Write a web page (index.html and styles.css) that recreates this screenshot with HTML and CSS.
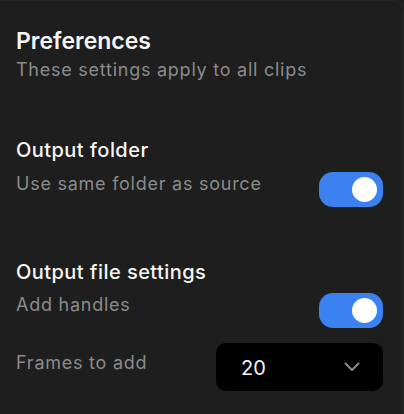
FILE: index.html
```html
<!DOCTYPE html>
<html>
<head>
<meta charset="utf-8">
<link rel="stylesheet" href="styles.css">
</head>
<body>
<div class="panel">
  <header class="head">
    <h1 class="title">Preferences</h1>
    <p class="sub">These settings apply to all clips</p>
  </header>

  <section class="section first">
    <h2 class="sec-title">Output folder</h2>
    <div class="row row-toggle-1">
      <span class="label">Use same folder as source</span>
      <span class="toggle on"><span class="knob"></span></span>
    </div>
  </section>

  <section class="section second">
    <h2 class="sec-title">Output file settings</h2>
    <div class="row row-toggle-2">
      <span class="label">Add handles</span>
      <span class="toggle on"><span class="knob"></span></span>
    </div>
    <div class="row row-select">
      <span class="label label-select">Frames to add</span>
      <div class="select">
        <span class="value">20</span>
        <svg class="chev" width="16" height="10" viewBox="0 0 16 10"><path d="M1.5 1.5 L8 8 L14.5 1.5" fill="none" stroke="#8a8a8a" stroke-width="2" stroke-linecap="round" stroke-linejoin="round"/></svg>
      </div>
    </div>
  </section>
</div>
</body>
</html>
```
FILE: styles.css
```css
html, body {
  margin: 0;
  padding: 0;
  background: #1e1e1e;
  height: 100%;
  overflow: hidden;
}
body {
  font-family: Inter, "Noto Sans", sans-serif;
  color: #fff;
}
.panel {
  box-sizing: border-box;
  height: 100%;
  padding: 27px 20px 0 16px;
  border-top-right-radius: 10px;
  border-top: 1px solid #262626;
  border-right: 1px solid #262626;
}
.title {
  margin: 0;
  font-size: 23px;
  line-height: 28px;
  font-weight: 600;
  color: #f5f5f5;
  margin-top: -1px;
}
.sub {
  margin: 2.5px 0 0;
  font-size: 18px;
  line-height: 24px;
  letter-spacing: 0.75px;
  color: #8b8b8b;
}
.section.first {
  margin-top: 55px;
}
.section.second {
  margin-top: 52px;
}
.sec-title {
  margin: 0;
  font-size: 20px;
  line-height: 26px;
  font-weight: 500;
  letter-spacing: 0.45px;
  color: #f5f5f5;
}
.row {
  display: flex;
  justify-content: space-between;
  align-items: flex-start;
}
.row-toggle-1 {
  margin-top: 9px;
}
.row-toggle-2 {
  margin-top: 8px;
}
.row-select {
  margin-top: 15px;
}
.label {
  font-size: 18px;
  line-height: 24px;
  letter-spacing: 0.75px;
  color: #8b8b8b;
  margin-top: 0.5px;
}
.label-select {
  margin-top: 8px;
}
.toggle {
  width: 64px;
  height: 35px;
  border-radius: 14px;
  background: #3b82f0;
  display: flex;
  align-items: center;
  justify-content: flex-end;
  padding-right: 6px;
  box-sizing: border-box;
}
.knob {
  width: 25px;
  height: 25px;
  border-radius: 50%;
  background: #fff;
}
.select {
  width: 167px;
  height: 48px;
  border-radius: 10px;
  background: #000;
  display: flex;
  align-items: center;
  justify-content: space-between;
  padding: 0 23px 0 25px;
  box-sizing: border-box;
}
.value {
  font-size: 20px;
  line-height: 24px;
  color: #f5f5f5;
  margin-top: 2px;
}
.chev {
  display: block;
}
```
